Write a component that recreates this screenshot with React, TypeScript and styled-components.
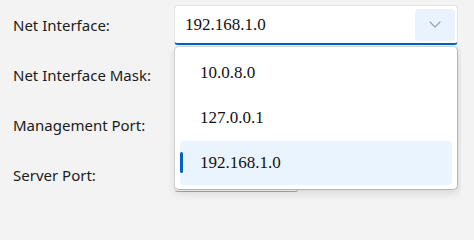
import React from "react";
import styled, { createGlobalStyle } from "styled-components";

const Global = createGlobalStyle`
  html, body { margin: 0; padding: 0; background: #f3f3f3; }
  body { font-family: "Noto Sans", "Open Sans", sans-serif; overflow: hidden; }
`;

const Form = styled.div`
  display: grid;
  grid-template-columns: 161px 1fr;
  grid-auto-rows: 50px;
  padding-left: 13px;
  width: 461px;
  height: 203px;
  overflow: hidden;
  box-sizing: border-box;
`;

const Label = styled.div`
  display: flex;
  align-items: center;
  font-size: 15px;
  color: #1b1b1b;
`;

const Field = styled.div`
  display: flex;
  align-items: center;
  position: relative;
`;

const SelectBox = styled.div`
  position: relative;
  box-sizing: border-box;
  width: 284px;
  height: 40px;
  background: #ffffff;
  border: 1px solid #e3e3e3;
  border-bottom: 2px solid #0063c3;
  border-radius: 4px;
  display: flex;
  align-items: center;
  justify-content: space-between;
  padding: 0 2px 0 10px;
`;

const Value = styled.span`
  font-family: "Liberation Serif", serif;
  font-size: 17px;
  color: #111;
`;

const ChevronButton = styled.div`
  width: 40px;
  height: 32px;
  border-radius: 4px;
  background: #e9f3fd;
  display: flex;
  align-items: center;
  justify-content: center;
`;

const TextInput = styled.div`
  box-sizing: border-box;
  width: 125px;
  height: 34px;
  background: #fbfbfb;
  border: 1px solid #e0e0e0;
  border-bottom: 1px solid #a8a8a8;
  border-radius: 4px;
`;

const Menu = styled.div`
  position: absolute;
  left: 0;
  top: 41px;
  box-sizing: border-box;
  width: 284px;
  height: 144px;
  background: #ffffff;
  border: 1px solid #d0d0d0;
  border-right-color: #b4b4b4;
  border-bottom-color: #b4b4b4;
  border-radius: 5px;
  box-shadow: 1px 3px 10px rgba(0, 0, 0, 0.12);
  padding: 4px 5px;
  display: flex;
  flex-direction: column;
  gap: 1px;
  z-index: 10;
`;

const Item = styled.div<{ $selected?: boolean }>`
  position: relative;
  height: 44px;
  border-radius: 4px;
  display: flex;
  align-items: center;
  padding-left: 20px;
  background: ${(p) => (p.$selected ? "#eaf4fe" : "transparent")};
  &::before {
    content: "";
    display: ${(p) => (p.$selected ? "block" : "none")};
    position: absolute;
    left: 0;
    top: 11px;
    width: 3px;
    height: 21px;
    border-radius: 2px;
    background: #0063c3;
  }
`;

const Anchor = styled.div`
  position: relative;
`;

const Chevron = () => (
  <svg width="12" height="7" viewBox="0 0 12 7" fill="none">
    <path d="M1 1l5 5 5-5" stroke="#9aa0a6" strokeWidth="1.1" strokeLinecap="round" strokeLinejoin="round" />
  </svg>
);

export default function App() {
  const options = ["10.0.8.0", "127.0.0.1", "192.168.1.0"];
  const selected = "192.168.1.0";
  return (
    <>
      <Global />
      <Form>
        <Label>Net Interface:</Label>
        <Field>
          <Anchor>
            <SelectBox>
              <Value>{selected}</Value>
              <ChevronButton>
                <Chevron />
              </ChevronButton>
            </SelectBox>
            <Menu>
              {options.map((o) => (
                <Item key={o} $selected={o === selected}>
                  <Value>{o}</Value>
                </Item>
              ))}
            </Menu>
          </Anchor>
        </Field>
        <Label>Net Interface Mask:</Label>
        <Field>
          <TextInput />
        </Field>
        <Label>Management Port:</Label>
        <Field>
          <TextInput />
        </Field>
        <Label>Server Port:</Label>
        <Field>
          <TextInput />
        </Field>
      </Form>
    </>
  );
}
